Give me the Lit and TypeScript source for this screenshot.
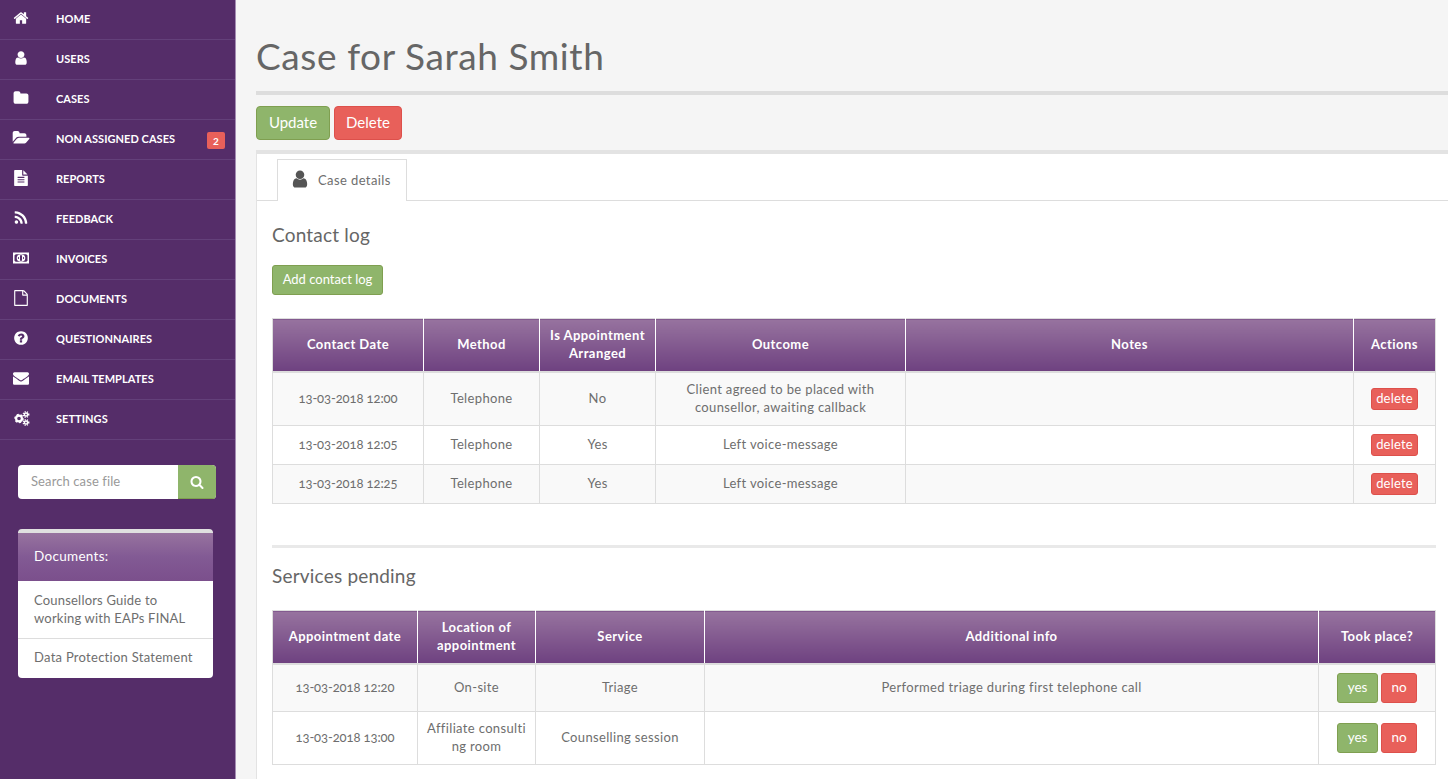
import { LitElement, html, css, svg } from "lit";
import { customElement } from "lit/decorators.js";

const P: Record<string, string> = {
  home: "M1472 992v480q0 26-19 45t-45 19h-384v-384h-256v384h-384q-26 0-45-19t-19-45v-480q0-1 .5-3t.5-3l575-474 575 474q1 2 1 6zm223-69l-62 74q-8 9-21 11h-3q-13 0-21-7l-692-577-692 577q-12 8-24 7-13-2-21-11l-62-74q-8-10-7-23.500t11-21.500l719-599q32-26 76-26t76 26l244 204v-195q0-14 9-23t23-9h192q14 0 23 9t9 23v408l219 182q10 8 11 21.500t-7 23.500z",
  user: "M1536 1399q0 109-62.500 187t-150.500 78h-854q-88 0-150.500-78t-62.500-187q0-85 8.500-160.500t31.500-152 58.500-131 94-89 134.500-34.500q131 128 313 128t313-128q76 0 134.500 34.500t94 89 58.500 131 31.500 152 8.500 160.500zm-256-887q0 159-112.500 271.500t-271.500 112.500-271.500-112.500-112.500-271.500 112.500-271.500 271.500-112.500 271.500 112.500 112.500 271.500z",
  folder: "M1728 608v704q0 92-66 158t-158 66h-1216q-92 0-158-66t-66-158v-960q0-92 66-158t158-66h320q92 0 158 66t66 158v32h672q92 0 158 66t66 158z",
  open: "M1845 931q0 35-25 66l-336 396q-43 51-120.500 86.500t-143.500 35.500h-1088q-34 0-60.500-13t-26.500-43q0-35 25-66l336-396q43-51 120.500-86.500t143.500-35.500h1088q34 0 60.500 13t26.500 43zm-343-344v160h-832q-94 0-197 47.500t-164 119.500l-337 396-5 6q0-4-.5-12.500t-.5-12.500v-960q0-92 66-158t158-66h320q92 0 158 66t66 158v32h544q92 0 158 66t66 158z",
  text: "M1596 476q14 14 28 36h-472v-472q22 14 36 28zm-476 164h544v1056q0 40-28 68t-68 28h-1344q-40 0-68-28t-28-68v-1600q0-40 28-68t68-28h800v544q0 40 28 68t68 28zm160 736v-64q0-14-9-23t-23-9h-704q-14 0-23 9t-9 23v64q0 14 9 23t23 9h704q14 0 23-9t9-23zm0-256v-64q0-14-9-23t-23-9h-704q-14 0-23 9t-9 23v64q0 14 9 23t23 9h704q14 0 23-9t9-23zm0-256v-64q0-14-9-23t-23-9h-704q-14 0-23 9t-9 23v64q0 14 9 23t23 9h704q14 0 23-9t9-23z",
  rss: "M576 1344q0 80-56 136t-136 56-136-56-56-136 56-136 136-56 136 56 56 136zm512 123q2 28-17 48-18 21-47 21h-135q-25 0-43-16.500t-20-41.500q-22-229-184.500-391.500t-391.500-184.500q-25-2-41.500-20t-16.500-43v-135q0-29 21-47 17-17 43-17h5q160 13 306 80.500t259 181.500q114 113 181.500 259t80.500 306zm512 2q2 27-18 47-18 20-46 20h-143q-26 0-44.500-17.500t-19.500-42.500q-12-215-101-408.500t-231.500-336-336-231.500-408.500-102q-25-1-42.500-19.500t-17.500-43.500v-143q0-28 20-46 18-18 44-18h3q262 13 501.500 120t425.500 294q187 186 294 425.500t120 501.500z",
  file: "M1596 380q28 28 48 76t20 88v1152q0 40-28 68t-68 28h-1344q-40 0-68-28t-28-68v-1600q0-40 28-68t68-28h896q40 0 88 20t76 48zm-444-244v376h376q-10-29-22-41l-313-313q-12-12-41-22zm384 1528v-1024h-416q-40 0-68-28t-28-68v-416h-768v1536h1280z",
  question: "M1024 1376v-192q0-14-9-23t-23-9h-192q-14 0-23 9t-9 23v192q0 14 9 23t23 9h192q14 0 23-9t9-23zm256-672q0-88-55.500-163t-138.500-116-170-41q-243 0-371 213-15 24 8 42l132 100q7 6 19 6 16 0 25-12 53-68 86-92 34-24 86-24 48 0 85.500 26t37.500 59q0 38-20 61t-68 45q-63 28-115.500 86.500t-52.500 125.500v36q0 14 9 23t23 9h192q14 0 23-9t9-23q0-19 21.500-49.500t54.500-49.500q32-18 49-28.500t46-35 44.500-48 28-60.500 12.500-81zm384 192q0 209-103 385.500t-279.500 279.500-385.500 103-385.500-103-279.500-279.500-103-385.500 103-385.500 279.500-279.500 385.500-103 385.500 103 279.500 279.500 103 385.500z",
  envelope: "M1792 710v794q0 66-47 113t-113 47h-1472q-66 0-113-47t-47-113v-794q44 49 101 87 362 246 497 345 57 42 92.500 65.500t94.500 48 110 24.500h2q51 0 110-24.500t94.500-48 92.500-65.500q170-123 498-345 57-39 100-87zm0-294q0 79-49 151t-122 123q-376 261-468 325-10 7-42.500 30.500t-54 38-52 32.500-57.500 27-50 9h-2q-23 0-50-9t-57.500-27-52-32.500-54-38-42.500-30.500q-91-64-262-182.500t-205-142.500q-62-42-117-115.500t-55-136.500q0-78 41.500-130t118.500-52h1472q65 0 112.500 47t47.500 113z",
  search: "M1216 832q0-185-131.500-316.500t-316.500-131.500-316.500 131.500-131.500 316.500 131.500 316.500 316.500 131.500 316.500-131.500 131.500-316.500zm512 832q0 52-38 90t-90 38q-54 0-90-38l-343-342q-179 124-399 124-143 0-273.500-55.500t-225-150-150-225-55.500-273.500 55.500-273.500 150-225 225-150 273.500-55.500 273.500 55.500 225 150 150 225 55.500 273.500q0 220-124 399l343 343q37 37 37 90z",
};

const icon = (name: string) => {
  if (name === "money") {
    return html`<svg class="ic" viewBox="0 0 16 16"><path fill="currentColor" fill-rule="evenodd" d="M0 2.5h16v11H0zM2.6 4.200a1.600 1.600 0 0 1-1.100 1.100v5.400a1.600 1.600 0 0 1 1.100 1.100h10.800a1.600 1.600 0 0 1 1.100-1.100V5.300a1.600 1.600 0 0 1-1.100-1.100z"/><ellipse cx="8" cy="8" rx="4.300" ry="3.800" fill="currentColor"/><path fill="#552d69" d="M7 5.200h2v5.600H7zM4.900 8a1 1 0 0 0 1.100 1V7a1 1 0 0 0-1.100 1zm6.200 0a1 1 0 0 1-1.100 1V7a1 1 0 0 1 1.100 1z"/></svg>`;
  }
  if (name === "gears") {
    return html`<svg class="ic" viewBox="0 0 16 16" fill="none" stroke="currentColor">${[
      [6, 8.5, 2.9, 2.2, 3.1],
      [13, 4.5, 1.6, 1.5, 1.7],
      [13, 12.5, 1.6, 1.5, 1.7],
    ].map(
      ([x, y, r, w, d]) => svg`<circle cx=${x} cy=${y} r=${r} stroke-width=${w}/><circle cx=${x} cy=${y} r=${r + 1.1} stroke-width="1.500" stroke-dasharray="${d * 0.65} ${d * 0.65}"/>`
    )}</svg>`;
  }
  return html`<svg class="ic" viewBox="0 0 1792 1792"><path fill="currentColor" d=${P[name]} /></svg>`;
};

const NAV = [
  ["home", "Home"],
  ["user", "Users"],
  ["folder", "Cases"],
  ["open", "Non assigned cases", "2"],
  ["text", "Reports"],
  ["rss", "Feedback"],
  ["money", "Invoices"],
  ["file", "Documents"],
  ["question", "Questionnaires"],
  ["envelope", "Email templates"],
  ["gears", "Settings"],
];

const delBtn = html`<span class="mini">delete</span>`;
const yn = html`<span class="yn"><span class="sm green">yes</span><span class="sm redb">no</span></span>`;
const date = (s: string) => html`<span class="date">${s}</span>`;

const LOG = {
  widths: [151, 116, 116, 250, 448, 82],
  head: ["Contact Date", "Method", html`Is Appointment<br />Arranged`, "Outcome", "Notes", "Actions"],
  rows: [
    [date("13-03-2018 12:00"), "Telephone", "No", html`Client agreed to be placed with<br />counsellor, awaiting callback`, "", delBtn],
    [date("13-03-2018 12:05"), "Telephone", "Yes", "Left voice-message", "", delBtn],
    [date("13-03-2018 12:25"), "Telephone", "Yes", "Left voice-message", "", delBtn],
  ],
};
const SERVICES = {
  widths: [145, 118, 169, 614, 117],
  head: ["Appointment date", html`Location of<br />appointment`, "Service", "Additional info", "Took place?"],
  rows: [
    [date("13-03-2018 12:20"), "On-site", "Triage", "Performed triage during first telephone call", yn],
    [date("13-03-2018 13:00"), html`Affiliate consulti<br />ng room`, "Counselling session", "", yn],
  ],
};

@customElement("app-root")
export class AppRoot extends LitElement {
  static styles = css`
    :host {
      display: block;
      height: 100vh;
      overflow: hidden;
      font-family: Lato, "Liberation Sans", sans-serif;
      color: #6e6e6e;
      background: #f5f5f5;
    }
    * { box-sizing: border-box; }
    .app { display: flex; height: 100%; }
    aside {
      flex: 0 0 236px;
      background: #552d69;
      border-right: 1px solid #a58db3;
    }
    .nav-item {
      display: flex;
      align-items: center;
      height: 40px;
      border-bottom: 1px solid #63407a;
      color: #fff;
      font-size: 11px;
      font-weight: 700;
      letter-spacing: 0.05px;
      text-transform: uppercase;
      position: relative;
      padding-bottom: 3px;
    }
    .nav-icon { flex: 0 0 56px; padding-left: 13px; height: 16px; margin-top: -1px; display: flex; }
    .ic { width: 16px; height: 16px; display: block; overflow: visible; }
    .badge {
      position: absolute;
      left: 207px;
      top: 12px;
      width: 18px;
      height: 17px;
      background: #e8605a;
      border-radius: 2px;
      font-size: 10px;
      display: flex;
      align-items: center;
      justify-content: center;
    }
    .search {
      display: flex;
      width: 198px;
      height: 34px;
      margin: 25px 0 0 18px;
      border-radius: 4px;
      overflow: hidden;
      background: #fff;
    }
    .search .ph {
      flex: 1;
      padding-left: 13px;
      font-size: 13px;
      line-height: 33px;
      color: #999;
      letter-spacing: 0.1px;
    }
    .search .go {
      width: 38px;
      background: #8fb56b;
      border-bottom: 1px solid #7f9f50;
      color: #fff;
      display: flex;
      align-items: center;
      justify-content: center;
    }
    .search .go .ic { width: 14px; height: 14px; }
    .docs {
      width: 195px;
      margin: 30px 0 0 18px;
      border-top: 4px solid #e0e0e0;
      border-radius: 4px;
      background: #fff;
      overflow: hidden;
      font-size: 13px;
      line-height: 18px;
    }
    .docs .hd {
      height: 48px;
      padding: 14px 16px;
      color: #fff;
      font-size: 13.500px;
      letter-spacing: 0.3px;
      background: linear-gradient(#97739f, #825a94 50%, #7b4f8c);
    }
    .docs .it { padding: 10px 16px 11px; letter-spacing: 0.2px; }
    .docs .it + .it { border-top: 1px solid #ddd; padding: 9px 16px 12px; letter-spacing: 0.27px; }
    main { flex: 1; min-width: 0; padding-left: 20px; }
    .title {
      height: 95px;
      border-bottom: 4px solid #ddd;
      padding-top: 34px;
    }
    h1 {
      margin: 0;
      font-size: 37px;
      line-height: 44px;
      font-weight: 400;
      letter-spacing: 0.6px;
      color: #666;
    }
    .actions { display: flex; gap: 4px; margin: 11px 0 10px; }
    .btn {
      height: 34px;
      border-radius: 4px;
      color: #fff;
      font-size: 15px;
      line-height: 30px;
      border-width: 1px;
      border-style: solid;
      text-align: center;
    }
    .btn.green { width: 74px; }
    .btn.redb { width: 68px; }
    .green { background: #8fb56b; border-color: #7f9f50; }
    .redb { background: #e8605a; border-color: #dd504b; }
    .panel {
      background: #fff;
      border-top: 4px solid #e3e3e3;
      border-left: 1px solid #e3e3e3;
      height: 640px;
    }
    .tabs {
      height: 47px;
      padding: 5px 0 0 20px;
      border-bottom: 1px solid #ddd;
    }
    .tab {
      width: 130px;
      height: 42px;
      background: #fff;
      border: 1px solid #ddd;
      border-bottom: 0;
      display: flex;
      align-items: center;
      padding: 0 0 2px 12px;
      gap: 8px;
      font-size: 13px;
      letter-spacing: 0.4px;
    }
    .tab .ic { color: #555; width: 20px; height: 20px; margin-top: -1px; }
    .content { padding: 0 12px 0 15px; }
    h3 {
      margin: 0;
      font-size: 19px;
      font-weight: 400;
      line-height: 24px;
      letter-spacing: 0.2px;
      color: #666;
    }
    .h-log { padding-top: 22px; }
    .add {
      display: block;
      height: 30px;
      width: 111px;
      margin-top: 18px;
      border-width: 1px;
      border-style: solid;
      border-radius: 3px;
      color: #fff;
      font-size: 13px;
      line-height: 26px;
      text-align: center;
    }
    .t-log { margin-top: 23px; }
    table {
      border-collapse: collapse;
      table-layout: fixed;
      width: 1164px;
      font-size: 13px;
      line-height: 18px;
    }
    th, td { border: 1px solid #ddd; text-align: center; }
    td { padding: 7px 8px 9px; letter-spacing: 0.35px; }
    th {
      color: #fff;
      font-weight: 700;
      background: linear-gradient(#97739f, #6e4180);
      border-left-color: #fff;
      border-right-color: #fff;
      border-bottom: 2px solid #ddd;
      letter-spacing: 0.45px;
      padding: 7px 2px 9px;
    }
    th:first-child { border-left-color: #ddd; }
    th:last-child { border-right-color: #ddd; }
    tbody tr:nth-child(odd) td { background: #f9f9f9; }
    .date {
      font-variant-numeric: oldstyle-nums;
      letter-spacing: -0.1px;
    }
    .mini {
      display: block;
      width: 47px;
      height: 22px;
      margin: 1px auto -1px;
      border-radius: 3px;
      background: #e8605a;
      border: 1px solid #dd504b;
      color: #fff;
      line-height: 19px;
      letter-spacing: 0.2px;
    }
    .yn { display: flex; gap: 3px; justify-content: center; margin: 1px 0 -1px; }
    .sm {
      height: 30px;
      border-width: 1px;
      border-style: solid;
      border-radius: 3px;
      color: #fff;
      line-height: 26px;
      letter-spacing: 0;
      font-size: 13.500px;
    }
    .sm.green { width: 41px; }
    .sm.redb { width: 36px; }
    hr {
      margin: 41px 0 0;
      border: 0;
      height: 3px;
      background: #e9e9e9;
    }
    .h-svc { padding-top: 16px; }
    .t-svc { margin-top: 22px; }
  `;

  private table(t: { widths: number[]; head: unknown[]; rows: unknown[][] }, cls: string) {
    return html`<table class=${cls}>
      <colgroup>${t.widths.map((w) => html`<col style="width:${w}px" />`)}</colgroup>
      <thead><tr>${t.head.map((h) => html`<th>${h}</th>`)}</tr></thead>
      <tbody>${t.rows.map((r) => html`<tr>${r.map((c) => html`<td>${c}</td>`)}</tr>`)}</tbody>
    </table>`;
  }

  render() {
    return html`<div class="app">
      <aside>
        <nav>
          ${NAV.map(
            ([i, label, badge]) => html`<div class="nav-item">
              <span class="nav-icon">${icon(i)}</span>
              <span>${label}</span>
              ${badge ? html`<span class="badge">${badge}</span>` : ""}
            </div>`
          )}
        </nav>
        <div class="search">
          <div class="ph">Search case file</div>
          <div class="go">${icon("search")}</div>
        </div>
        <div class="docs">
          <div class="hd">Documents:</div>
          <div class="it">Counsellors Guide to<br />working with EAPs FINAL</div>
          <div class="it">Data Protection Statement</div>
        </div>
      </aside>
      <main>
        <div class="title"><h1>Case for Sarah Smith</h1></div>
        <div class="actions">
          <div class="btn green">Update</div>
          <div class="btn redb">Delete</div>
        </div>
        <div class="panel">
          <div class="tabs">
            <div class="tab">${icon("user")}<span>Case details</span></div>
          </div>
          <div class="content">
            <h3 class="h-log">Contact log</h3>
            <div class="add green">Add contact log</div>
            ${this.table(LOG, "t-log")}
            <hr />
            <h3 class="h-svc">Services pending</h3>
            ${this.table(SERVICES, "t-svc")}
          </div>
        </div>
      </main>
    </div>`;
  }
}
